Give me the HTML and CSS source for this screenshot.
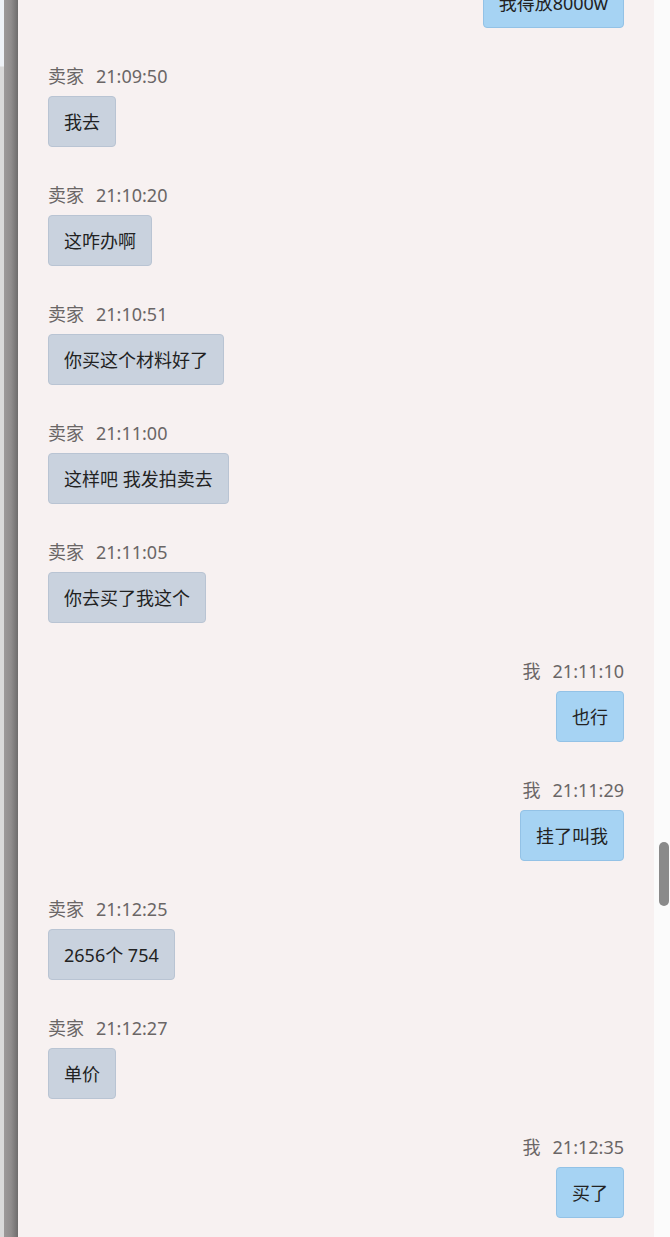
FILE: index.html
```html
<!DOCTYPE html>
<html lang="zh-CN">
<head>
<meta charset="utf-8">
<title>聊天记录</title>
<link rel="stylesheet" href="styles.css">
</head>
<body>
<div class="frame">
  <div class="edge"></div>
  <div class="shade"></div>
  <main class="chat">
    <div class="msg me first">
      <div class="bubble">我得放8000w</div>
    </div>
    <div class="msg">
      <div class="meta"><span class="who">卖家</span><span class="time">21:09:50</span></div>
      <div class="bubble">我去</div>
    </div>
    <div class="msg">
      <div class="meta"><span class="who">卖家</span><span class="time">21:10:20</span></div>
      <div class="bubble">这咋办啊</div>
    </div>
    <div class="msg">
      <div class="meta"><span class="who">卖家</span><span class="time">21:10:51</span></div>
      <div class="bubble">你买这个材料好了</div>
    </div>
    <div class="msg">
      <div class="meta"><span class="who">卖家</span><span class="time">21:11:00</span></div>
      <div class="bubble">这样吧 我发拍卖去</div>
    </div>
    <div class="msg">
      <div class="meta"><span class="who">卖家</span><span class="time">21:11:05</span></div>
      <div class="bubble">你去买了我这个</div>
    </div>
    <div class="msg me">
      <div class="meta"><span class="who">我</span><span class="time">21:11:10</span></div>
      <div class="bubble">也行</div>
    </div>
    <div class="msg me">
      <div class="meta"><span class="who">我</span><span class="time">21:11:29</span></div>
      <div class="bubble">挂了叫我</div>
    </div>
    <div class="msg">
      <div class="meta"><span class="who">卖家</span><span class="time">21:12:25</span></div>
      <div class="bubble">2656个 754</div>
    </div>
    <div class="msg">
      <div class="meta"><span class="who">卖家</span><span class="time">21:12:27</span></div>
      <div class="bubble">单价</div>
    </div>
    <div class="msg me">
      <div class="meta"><span class="who">我</span><span class="time">21:12:35</span></div>
      <div class="bubble">买了</div>
    </div>
  </main>
  <div class="track"><div class="thumb"></div></div>
</div>
</body>
</html>
```

FILE: styles.css
```css
html, body {
  margin: 0;
  padding: 0;
  height: 100%;
  overflow: hidden;
}
body {
  font-family: "Noto Sans", "Noto Sans CJK SC", sans-serif;
  background: #f7f1f1;
}
.frame {
  display: flex;
  height: 1237px;
  overflow: hidden;
}
.edge {
  width: 4px;
  flex: none;
  background: linear-gradient(to bottom, #eef2f7 0, #eef2f7 66px, #d9d9d9 67px, #d9d9d9 100%);
}
.shade {
  width: 14px;
  flex: none;
  background: linear-gradient(to right, #9c9999 0%, #908d8d 50%, #6e6c6c 100%);
}
.chat {
  flex: 1;
  background: #f7f1f1;
  padding: 0 30px 0 30px;
  display: flex;
  flex-direction: column;
  gap: 36px;
  min-width: 0;
}
.msg {
  display: flex;
  flex-direction: column;
  align-items: flex-start;
}
.msg.me {
  align-items: flex-end;
}
.msg.first {
  margin-top: -23px;
}
.meta {
  font-size: 18px;
  line-height: 24px;
  color: #6a6666;
  margin-bottom: 8px;
  white-space: nowrap;
}
.who {
  margin-right: 12px;
}
.bubble {
  font-size: 18px;
  line-height: 24px;
  color: #222;
  padding: 13px 15px 12px;
  border-radius: 4px;
  border: 1px solid #b9c4d3;
  background: #c9d2de;
  white-space: nowrap;
}
.me .bubble {
  background: #a6d3f3;
  border-color: #93c2e6;
}
.track {
  width: 16px;
  flex: none;
  background: #fbfbfb;
  display: flex;
  flex-direction: column;
  align-items: center;
}
.thumb {
  margin-top: 842px;
  margin-left: 4px;
  width: 10px;
  height: 64px;
  border-radius: 5px;
  background: #8a8a8a;
}
```
